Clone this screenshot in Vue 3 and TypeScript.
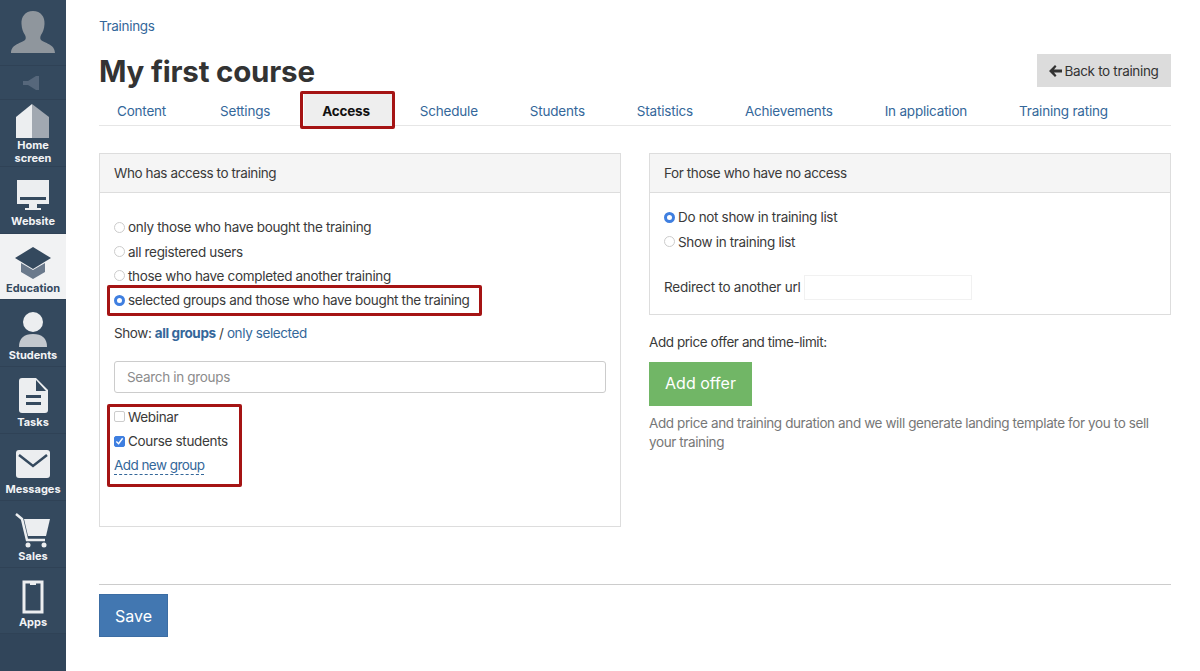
<script setup lang="ts">
const tabs = ['Content', 'Settings', 'Access', 'Schedule', 'Students', 'Statistics', 'Achievements', 'In application', 'Training rating']
</script>

<template>
  <div class="page">
    <aside class="side">
      <div class="item avatar">
        <svg width="66" height="66" viewBox="0 0 66 66"><path fill="#8f969d" d="M33 11c-8 0-12 6-11.500 13 .3 5 1.500 8 3.500 11 1 2 1 4 0 5-3 3-14 4-14 13h44c0-9-11-10-14-13-1-1-1-3 0-5 2-3 3.200-6 3.500-11C45 17 41 11 33 11z"/></svg>
      </div>
      <div class="item speaker">
        <svg width="22" height="16" viewBox="0 0 22 16"><path fill="#56677b" d="M1 6h5l8-5h3v14h-3l-8-5H1z"/></svg>
      </div>
      <div class="item home">
        <svg width="36" height="36" viewBox="0 0 36 36"><path fill="#eceef0" d="M17 1 1 14v21h16z"/><path fill="#a1a8b1" d="m17 1 17 13v21H17z"/></svg>
        <span>Home<br>screen</span>
      </div>
      <div class="item web">
        <svg width="36" height="34" viewBox="0 0 36 34"><path fill="#eceef0" d="M2 2h32v24H2z"/><path fill="#34495e" d="M5 19h26v3H5z"/><path fill="#eceef0" d="M14 26h8v4h4v2H10v-2h4z"/></svg>
        <span>Website</span>
      </div>
      <div class="item active">
        <svg width="38" height="34" viewBox="0 0 38 34"><path fill="#6b7a8c" d="M7 17l12 7 12-7v9L19 33 7 26z"/><path fill="#34495e" d="M19 1l18 11-18 11L1 12z"/></svg>
        <span>Education</span>
      </div>
      <div class="item">
        <svg width="36" height="36" viewBox="0 0 36 36"><circle cx="18" cy="11" r="10" fill="#eceef0"/><path fill="#c3c8ce" d="M4 36c0-9 5-13 14-13s14 4 14 13z"/></svg>
        <span>Students</span>
      </div>
      <div class="item">
        <svg width="32" height="37" viewBox="0 0 32 37"><path fill="#eceef0" d="M5 1h14l12 12v20a3 3 0 0 1-3 3H5a3 3 0 0 1-3-3V4a3 3 0 0 1 3-3z"/><path fill="#34495e" d="M19 3l10 11H19zM9 18h15v3H9zM9 25h15v3H9z"/></svg>
        <span>Tasks</span>
      </div>
      <div class="item msg">
        <svg width="36" height="30" viewBox="0 0 36 30"><rect x="1" y="1" width="34" height="28" rx="3" fill="#eceef0"/><path fill="none" stroke="#34495e" stroke-width="2.500" d="M4 6l14 11L32 6"/></svg>
        <span>Messages</span>
      </div>
      <div class="item">
        <svg width="36" height="36" viewBox="0 0 36 36"><path fill="none" stroke="#eceef0" stroke-width="2.500" d="M1 2l6 5 5 21h18"/><path fill="#eceef0" d="M9 7h26l-4 17H13z"/><circle cx="13" cy="33" r="2.500" fill="#eceef0"/><circle cx="29" cy="33" r="2.500" fill="#eceef0"/></svg>
        <span>Sales</span>
      </div>
      <div class="item">
        <svg width="24" height="34" viewBox="0 0 24 34"><path fill="none" stroke="#eceef0" stroke-width="3" d="M3 2h18v30H3z"/><path fill="#eceef0" d="M9 2h6v3H9z"/></svg>
        <span>Apps</span>
      </div>
      <div class="rest"></div>
    </aside>

    <main class="main">
      <a class="crumb">Trainings</a>
      <div class="head">
        <h1>My first course</h1>
        <button class="back">
          <svg width="13" height="12" viewBox="0 0 13 12"><path fill="#333" d="M6 0 7.500 1.500 5 4.500h8v3H5l2.500 3L6 12 0 6z"/></svg>
          Back to training
        </button>
      </div>
      <nav class="tabs">
        <a v-for="t in tabs" :key="t" class="tab" :class="{ on: t === 'Access' }">{{ t }}</a>
      </nav>

      <div class="cols">
        <section class="panel left">
          <header>Who has access to training</header>
          <div class="body">
            <label class="opt"><i class="radio"></i>only those who have bought the training</label>
            <label class="opt"><i class="radio"></i>all registered users</label>
            <label class="opt"><i class="radio"></i>those who have completed another training</label>
            <label class="opt marked"><i class="radio sel"></i>selected groups and those who have bought the training</label>
            <p class="show">Show: <a class="b">all groups</a> / <a>only selected</a></p>
            <div class="search">Search in groups</div>
            <div class="groups">
              <label class="opt"><i class="check"></i>Webinar</label>
              <label class="opt"><i class="check yes"><svg width="10" height="10" viewBox="0 0 10 10"><path d="M1.500 5.500l2.500 2.500 4.500-6" fill="none" stroke="#fff" stroke-width="1.600"/></svg></i>Course students</label>
              <a class="add">Add new group</a>
            </div>
          </div>
        </section>

        <div class="rightcol">
          <section class="panel right">
            <header>For those who have no access</header>
            <div class="body">
              <label class="opt"><i class="radio sel"></i>Do not show in training list</label>
              <label class="opt"><i class="radio"></i>Show in training list</label>
              <div class="url"><span>Redirect to another url</span><i class="field"></i></div>
            </div>
          </section>
          <p class="offer-t">Add price offer and time-limit:</p>
          <button class="offer">Add offer</button>
          <p class="note">Add price and training duration and we will generate landing template for you to sell your training</p>
        </div>
      </div>

      <div class="foot"><button class="save">Save</button></div>
    </main>
  </div>
</template>

<style>
body { margin: 0; background: #fff; }
</style>

<style scoped>
.page { display: flex; width: 1200px; height: 671px; overflow: hidden; font-family: Inter, "Liberation Sans", sans-serif; font-size: 13.5px; color: #3a3a3a; background: #fff; letter-spacing: -0.33px; }
.side { width: 66px; height: 671px; flex: none; display: flex; flex-direction: column; background: #34495e; }
.item { height: 66.8px; flex: none; box-sizing: border-box; display: flex; flex-direction: column; align-items: center; justify-content: flex-end; padding-bottom: 4px; color: #f2f3f5; font-size: 11px; font-weight: 700; letter-spacing: 0; line-height: 13px; text-align: center; border-bottom: 1px solid #2f4256; }
.item svg { flex: none; margin-bottom: 2px; }
.home { padding-bottom: 1px; }
.home svg { margin-bottom: 0; }
.web { padding-bottom: 5px; }
.web svg { margin-bottom: 3px; }
.msg svg { margin-bottom: 4px; }
.avatar { height: 66px; padding: 0; justify-content: center; }
.avatar svg { margin: 0; }
.speaker { height: 34px; padding: 0; justify-content: center; }
.speaker svg { margin: 0; }
.active { background: #f1f2f3; color: #34495e; }
.rest { flex: 1; background: #31455a; }
.main { flex: 1; padding: 0 29px 0 33px; min-width: 0; }
a { color: #34679a; }
.crumb { display: block; padding-top: 18px; line-height: 17px; }
.head { display: flex; justify-content: space-between; align-items: flex-start; height: 60px; }
h1 { margin: 16px 0 0; font-size: 29.500px; line-height: 40px; font-weight: 700; color: #333; letter-spacing: -0.2px; }
.back { display: flex; align-items: center; justify-content: center; gap: 2px; width: 134px; height: 33px; margin-top: 19px; border: 0; background: #dcdcdc; color: #333; font: inherit; letter-spacing: inherit; padding: 0; }
.tabs { display: flex; height: 31px; box-sizing: border-box; border-bottom: 1px solid #e6e6e6; gap: 16px; letter-spacing: -0.2px; }
.tab { padding: 0 18px; line-height: 33px; height: 30px; white-space: nowrap; box-sizing: border-box; }
.tab:first-child { padding-right: 20px; }
.tab.on { position: relative; font-weight: 700; color: #111; background: #eee; margin-top: -1px; height: 32px; line-height: 34px; padding-right: 16px; box-shadow: 6px 0 0 #eee; }
.tab.on::after { content: ""; position: absolute; inset: -3px -9px -3px -4px; border: 3px solid #a51414; border-radius: 2px; pointer-events: none; }
.cols { display: grid; grid-template-columns: 522px 522px; gap: 28px; margin-top: 27px; }
.panel { border: 1px solid #ddd; box-sizing: border-box; }
.panel header { height: 38px; line-height: 38px; background: #f5f5f5; border-bottom: 1px solid #ddd; padding-left: 14px; letter-spacing: -0.4px; }
.left { height: 374px; }
.left .body { padding: 22px 14px; }
.right .body { padding: 12px 14px 0; height: 121px; box-sizing: border-box; }
.opt { display: flex; align-items: center; height: 24.400px; white-space: nowrap; }
.radio { width: 11px; height: 11px; flex: none; margin-right: 3px; border-radius: 50%; border: 1px solid #ccc; background: #fff; box-sizing: border-box; }
.radio.sel { border: 3px solid #3f7fe0; }
.marked { position: relative; width: fit-content; }
.marked::after { content: ""; position: absolute; inset: -3px -12px -3px -7px; border: 3px solid #a51414; border-radius: 2px; pointer-events: none; }
.show { margin: 10px 0 0; line-height: 20px; letter-spacing: -0.4px; }
.b { font-weight: 700; }
.search { height: 32px; line-height: 31px; box-sizing: border-box; margin-top: 18px; border: 1px solid #ccc; border-radius: 3px; padding-left: 12px; color: #8c8c8c; }
.groups { position: relative; width: fit-content; margin-top: 12px; }
.groups::after { content: ""; position: absolute; inset: -1px -14px -12px -7px; border: 3px solid #a51414; border-radius: 2px; pointer-events: none; }
.check { display: flex; align-items: center; justify-content: center; width: 11px; height: 11px; flex: none; margin-right: 3px; border: 1px solid #ccc; border-radius: 2px; box-sizing: border-box; }
.check.yes { background: #3f7fe0; border-color: #3f7fe0; }
.add { display: inline-block; line-height: 17px; border-bottom: 1px dashed #34679a; margin-top: 4px; letter-spacing: -0.55px; }
.url { display: flex; align-items: center; margin-top: 21px; gap: 3px; letter-spacing: -0.24px; }
.field { width: 168px; height: 25px; border: 1px solid #f1f1f1; box-sizing: border-box; }
.offer-t { margin: 18px 0 0; line-height: 18px; letter-spacing: -0.43px; }
.offer { display: block; width: 103px; height: 44px; margin-top: 11px; border: 0; background: #71b666; color: #fff; font: inherit; font-size: 16px; padding: 0 0 2px; }
.note { margin: 8px 0 0; line-height: 19px; color: #777; letter-spacing: -0.39px; }
.foot { margin-top: 57px; border-top: 1px solid #ccc; padding-top: 9px; }
.save { width: 69px; height: 43px; border: 1px solid #3c6da3; background: #4277b1; color: #fff; font: inherit; font-size: 16px; padding: 0; }
</style>
